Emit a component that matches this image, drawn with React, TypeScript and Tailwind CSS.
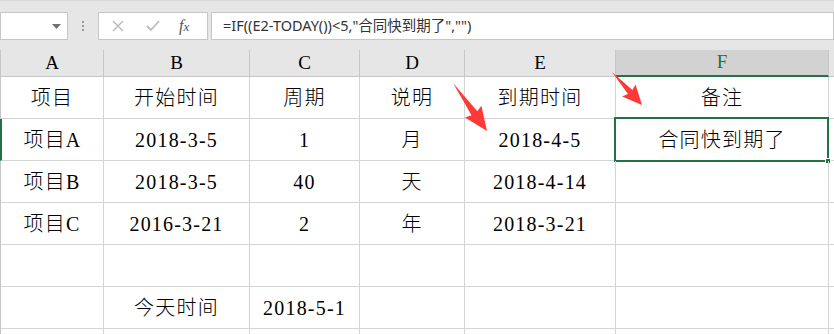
import React from "react";

const cols = [104, 146, 110, 105, 151, 213];
const letters = ["A", "B", "C", "D", "E", "F"];

const rows: string[][] = [
  ["项目", "开始时间", "周期", "说明", "到期时间", "备注"],
  ["项目A", "2018-3-5", "1", "月", "2018-4-5", "合同快到期了"],
  ["项目B", "2018-3-5", "40", "天", "2018-4-14", ""],
  ["项目C", "2016-3-21", "2", "年", "2018-3-21", ""],
  ["", "", "", "", "", ""],
  ["", "今天时间", "2018-5-1", "", "", ""],
  ["", "", "", "", "", ""],
];

const cellFont = { fontFamily: "'Liberation Serif', 'Noto Sans CJK SC', serif" };

export default function App() {
  return (
    <div className="relative w-[834px] h-[334px] overflow-hidden bg-white">
      {/* formula bar */}
      <div className="h-[50px] bg-[#e6e6e6] border-t border-[#d9d9d9] flex items-start pt-[11px]">
        <div className="w-[68px] h-[28px] bg-white border border-[#c6c6c6] flex items-center justify-end pr-[6px]">
          <svg width="9" height="5" viewBox="0 0 9 5"><path d="M0 0 H9 L4.5 5 Z" fill="#707070" /></svg>
        </div>
        <div className="w-[30px] h-[28px] flex flex-col items-center justify-center gap-[2px]">
          <div className="w-[2px] h-[2px] bg-[#9a9a9a]" />
          <div className="w-[2px] h-[2px] bg-[#9a9a9a]" />
          <div className="w-[2px] h-[2px] bg-[#9a9a9a]" />
        </div>
        <div className="w-[110px] h-[28px] bg-white border border-[#c6c6c6] flex items-center pl-[13px]">
          <svg width="12" height="12" viewBox="0 0 12 12"><path d="M1 1 L11 11 M11 1 L1 11" stroke="#bdbdbd" strokeWidth="1.5" /></svg>
          <svg width="14" height="12" viewBox="0 0 14 12" className="ml-[22px]"><path d="M1 6 L5 10 L13 1" stroke="#bdbdbd" strokeWidth="1.8" fill="none" /></svg>
          <span className="ml-[19px] text-[16px] italic text-[#555] leading-none" style={{ fontFamily: "'Liberation Serif', serif" }}>f<span className="text-[13px]">x</span></span>
        </div>
        <div className="ml-[3px] flex-1 h-[28px] bg-white border border-[#c6c6c6] flex items-center pl-[11px] text-[14.5px] text-[#333]" style={{ fontFamily: "'Noto Sans', 'Noto Sans CJK SC', sans-serif" }}>
          =IF((E2-TODAY())&lt;5,"合同快到期了","")
        </div>
      </div>

      {/* column headers */}
      <div className="flex h-[27px] bg-[#e6e6e6]">
        {cols.map((w, i) => (
          <div
            key={i}
            style={{ width: w, ...cellFont }}
            className={
              i === 5
                ? "bg-[#d2d2d2] border-r border-[#c6c6c6] border-b-2 border-b-[#217346] text-[#217346] flex items-center justify-center text-[19px]"
                : "border-r border-[#c6c6c6] border-b border-b-[#c6c6c6] text-black flex items-center justify-center text-[19px]" + (i === 0 ? " border-l border-l-[#c6c6c6]" : "")
            }
          >
            {letters[i]}
          </div>
        ))}
        <div className="flex-1 border-b border-[#c6c6c6]" />
      </div>

      {/* grid */}
      <div className="flex flex-col">
        {rows.map((r, ri) => (
          <div key={ri} className="flex h-[42px]">
            {r.map((t, ci) => (
              <div
                key={ci}
                style={{ width: cols[ci], ...cellFont }}
                className={
                  "relative shrink-0 border-r border-b border-[#d4d4d4] flex items-center justify-center text-[20px] font-light text-black tracking-[1.2px]" +
                  (ci === 0 ? (ri === 1 ? " border-l-2 border-l-[#217346]" : " border-l border-l-[#c6c6c6]") : "")
                }
              >
                {t}
                {ri === 1 && ci === 5 && (
                  <div className="absolute left-[-2px] top-[-2px] right-[-1px] bottom-[-2px] border-2 border-[#217346]">
                    <div className="absolute right-[-4px] bottom-[-4px] w-[6px] h-[6px] bg-[#217346] border border-white" />
                  </div>
                )}
              </div>
            ))}
            <div className="flex-1 border-b border-[#d4d4d4]" />
          </div>
        ))}
      </div>

      {/* arrows */}
      <svg className="absolute left-0 top-0 pointer-events-none" width="834" height="334">
        <polygon points="453,83 477.3,111.2 481.4,105.8 487,131 465,117.4 471.5,115.2" fill="#ff3838" />
        <polygon points="612,72 632.4,90 635.5,84.4 642,105 622.1,96.6 628,94" fill="#ff3838" />
      </svg>
    </div>
  );
}
